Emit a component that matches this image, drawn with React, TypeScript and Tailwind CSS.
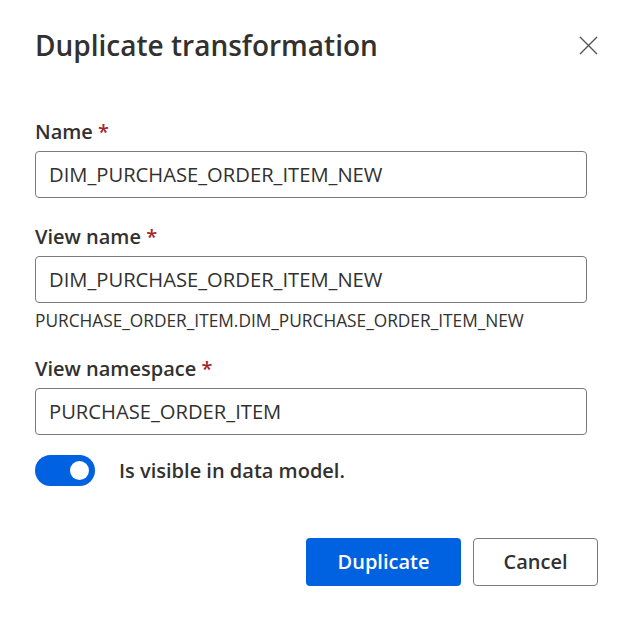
import { useState } from 'react';

const font = { fontFamily: '"Open Sans", "Noto Sans", sans-serif' };

const Field = ({ label, value, helper }: { label: string; value: string; helper?: string }) => (
  <div className="flex flex-col">
    <label className="text-[20px] leading-6 font-semibold text-[#323130]">
      {label} <span className="text-[#a4262c]">*</span>
    </label>
    <div className="mt-[7px] h-[47px] w-full rounded-[4px] border border-[#7a7a7a] flex items-center px-[13px]">
      <span className="text-[20.2px] text-[#323130]">{value}</span>
    </div>
    {helper && <p className="mt-[8px] text-[17.3px] leading-5 text-[#323130]">{helper}</p>}
  </div>
);

export default function App() {
  const [visible, setVisible] = useState(true);

  return (
    <div className="w-[634px] h-[622px] bg-white pl-[35px] pr-[36px] pt-[24px]" style={font}>
      <div className="flex items-center justify-between h-[42px]">
        <h1 className="text-[28px] font-semibold text-[#323130]">Duplicate transformation</h1>
        <button className="w-8 h-8 flex items-center justify-center mr-[-6px]">
          <svg width="19" height="19" viewBox="0 0 19 19" fill="none" stroke="#555" strokeWidth="1.4">
            <path d="M1 1 L18 18 M18 1 L1 18" />
          </svg>
        </button>
      </div>

      <div className="mt-[54px] flex flex-col w-[552px]">
        <Field label="Name" value="DIM_PURCHASE_ORDER_ITEM_NEW" />
        <div className="mt-[27px]">
          <Field
            label="View name"
            value="DIM_PURCHASE_ORDER_ITEM_NEW"
            helper="PURCHASE_ORDER_ITEM.DIM_PURCHASE_ORDER_ITEM_NEW"
          />
        </div>
        <div className="mt-[26px]">
          <Field label="View namespace" value="PURCHASE_ORDER_ITEM" />
        </div>

        <div className="mt-[20px] flex items-center gap-[24px]">
          <button
            onClick={() => setVisible(!visible)}
            className={`w-[60px] h-[31px] rounded-full flex items-center px-[6px] ${visible ? 'bg-[#0062e1] justify-end' : 'bg-gray-300 justify-start'}`}
          >
            <span className="w-[19px] h-[19px] rounded-full bg-white" />
          </button>
          <span className="text-[20px] font-semibold text-[#323130]">Is visible in data model.</span>
        </div>
      </div>

      <div className="mt-[52px] flex justify-end gap-[12px]">
        <button className="w-[155px] h-[48px] rounded-[4px] bg-[#0062e1] text-white text-[20px] font-semibold">
          Duplicate
        </button>
        <button className="w-[125px] h-[48px] rounded-[4px] border border-[#7a7a7a] text-[#323130] text-[20px] font-semibold">
          Cancel
        </button>
      </div>
    </div>
  );
}
